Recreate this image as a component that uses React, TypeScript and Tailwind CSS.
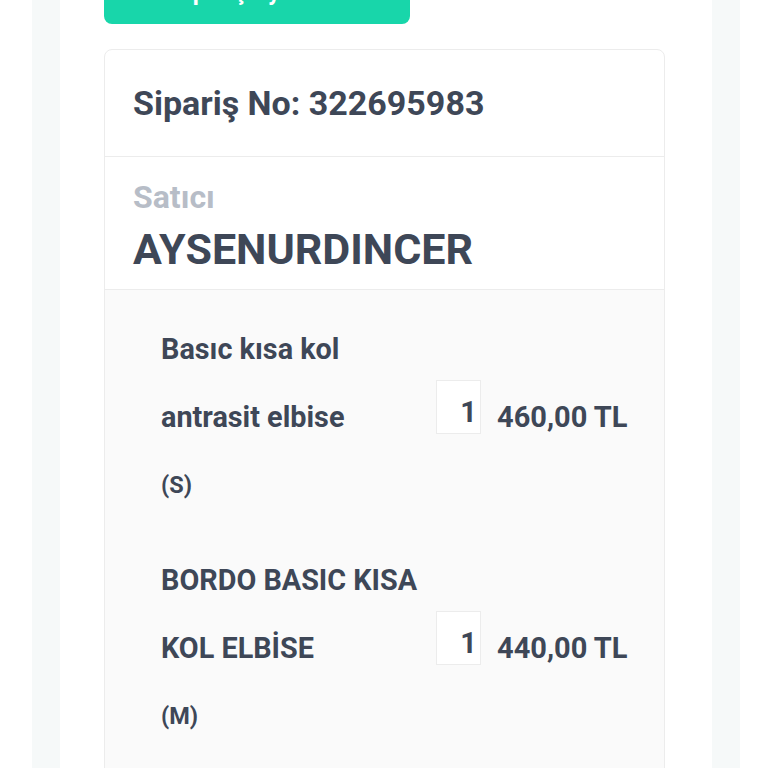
import React from 'react';

interface Item {
  lines: string[];
  size: string;
  qty: number;
  price: string;
}

const items: Item[] = [
  { lines: ['Basıc kısa kol', 'antrasit elbise'], size: '(S)', qty: 1, price: '460,00 TL' },
  { lines: ['BORDO BASIC KISA', 'KOL ELBİSE'], size: '(M)', qty: 1, price: '440,00 TL' },
];

const OrderItem: React.FC<{ item: Item }> = ({ item }) => (
  <div className="flex items-center">
    <div className="w-[270px] shrink-0">
      {item.lines.map((l) => (
        <div key={l} className="h-[68px] flex items-center text-[28.8px] font-bold whitespace-nowrap">{l}</div>
      ))}
      <div className="h-[68px] flex items-center text-[23.5px] font-bold">{item.size}</div>
    </div>
    <div className="ml-[5px] mb-[22px] w-[45px] h-[54px] bg-white border border-[#ececec] flex items-center justify-end pr-[3px] pt-[12px] text-[29px] font-bold">
      {item.qty}
    </div>
    <div className="ml-[16px] text-[29px] font-bold whitespace-nowrap">{item.price}</div>
  </div>
);

export default function App() {
  return (
    <div className="h-[768px] overflow-hidden bg-white pl-[32px] pr-[28px] text-[#3e4757]" style={{ fontFamily: 'Roboto, "Liberation Sans", sans-serif' }}>
      <div className="h-full bg-[#f6f9f9] px-[28px]">
        <div className="h-full bg-white pl-[44px] pr-[47px] flex flex-col">
          <div className="-mt-[40px] w-[306px] h-[64px] shrink-0 rounded-lg bg-[#18d6aa] flex items-center justify-center text-white text-[24px] font-bold">
            Sipariş Ayrıntısı
          </div>
          <div className="mt-[25px] shrink-0 border border-[#ececec] rounded-lg overflow-hidden">
            <div className="h-[107px] flex items-center pl-[28px] text-[34px] font-bold border-b border-[#ececec]">
              Sipariş No: 322695983
            </div>
            <div className="h-[133px] pl-[28px] pt-[18px] border-b border-[#ececec]">
              <div className="text-[32px] font-bold text-[#b7bdc7] leading-[44px]">Satıcı</div>
              <div className="text-[43px] font-bold leading-[60px]">AYSENURDINCER</div>
            </div>
            <div className="bg-[#fafafa] pl-[56px] pt-[26px] pb-[120px] flex flex-col gap-[27px]">
              {items.map((it) => (
                <OrderItem key={it.price} item={it} />
              ))}
            </div>
          </div>
        </div>
      </div>
    </div>
  );
}
